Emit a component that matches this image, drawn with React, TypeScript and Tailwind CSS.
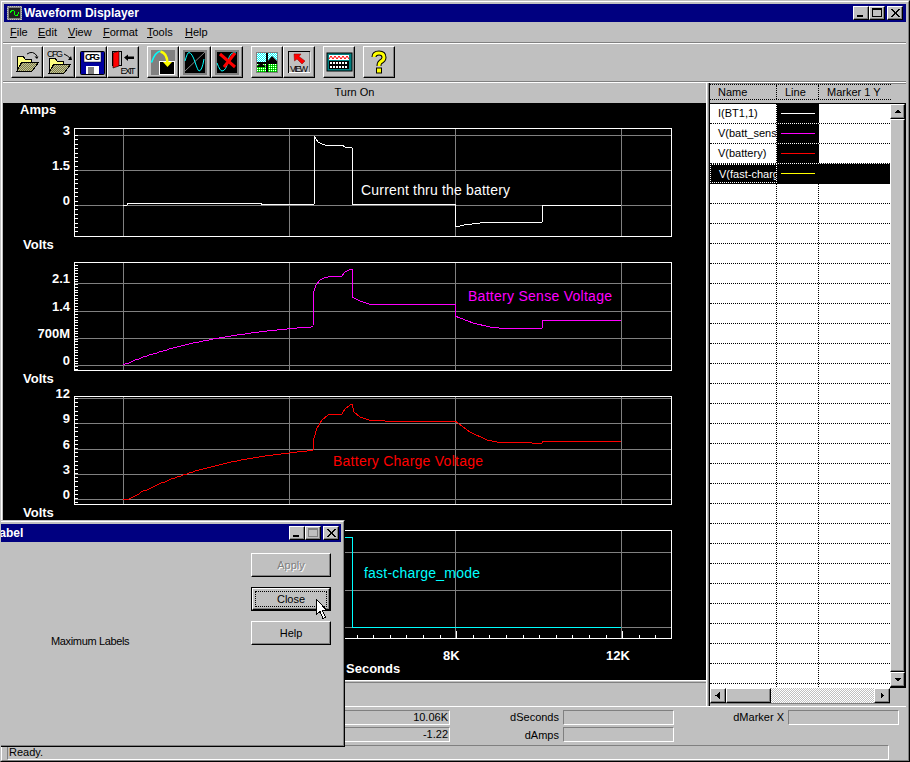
import type { ReactNode } from "react";

const raised = "border border-white border-r-black border-b-black shadow-[inset_-1px_-1px_0_#808080]";
const sunken = "border border-[#808080] border-r-white border-b-white";

const menus = [
  { label: "File", key: "F", rest: "ile", width: "w-[28px]" },
  { label: "Edit", key: "E", rest: "dit", width: "w-[30px]" },
  { label: "View", key: "V", rest: "iew", width: "w-[35px]" },
  { label: "Format", key: "F", rest: "ormat", width: "w-[44px]" },
  { label: "Tools", key: "T", rest: "ools", width: "w-[38px]" },
  { label: "Help", key: "H", rest: "elp", width: "w-[30px]" }
];

const rows = [
  { name: "I(BT1,1)", color: "#ffffff" },
  { name: "V(batt_sense)", color: "#ff00ff" },
  { name: "V(battery)", color: "#ff0000" },
  { name: "V(fast-charge_mode)", color: "#ffff00", selected: true }
];

// slow RC style rise, stepped to whole pixels like the plot
const rise = (x0: number, x1: number, y0: number, amount: number, tau: number) => {
  const out: string[] = [];
  for (let x = x0; x <= x1; x += 2) {
    out.push(`${x},${Math.round(y0 - amount * (1 - Math.exp(-(x - x0) / tau)))}`);
  }
  return out.join(" ");
};

const currentTrace =
  "123,205 127,205 127,203 261,203 261,204 314,204 314,136 316,139 318,142 322,144 325,145 342,145 345,147 352,148 352,204 455,204 455,227 460,226 464,225 472,224 480,223 493,222 542,222 542,205 621,205";
const senseTrace = `${rise(123, 314, 365, 47, 110)} 314,291 316,285 320,280 324,278 328,277 342,276 345,272 349,270 352,269 352,297 360,301 369,304 455,304 455,316 473,323 490,327 499,328 542,328 542,320 621,321`;
const chargeTrace = `123,499 ${rise(129, 314, 499, 58.7, 102)} 314,438 317,428 322,420 328,415 342,414 345,409 350,405 352,404 354,412 360,417 369,420 385,421 455,421 470,432 487,440 497,442 530,442 532,443 542,443 542,441 621,441`;

const ticks = (start: number, end: number, step: number) => {
  const out: number[] = [];
  for (let y = start; y <= end; y += step) out.push(Math.round(y) + 0.5);
  return out;
};

function Plot({ top, bottom, grid, tickStart, tickStep }: { top: number; bottom: number; grid: number[]; tickStart: number; tickStep: number }) {
  return (
    <g shapeRendering="crispEdges">
      {grid.map((y) => (
        <line key={y} x1={74} x2={671} y1={y} y2={y} stroke="#808080" />
      ))}
      {[123.5, 289.5, 455.5, 621.5].map((x) => (
        <line key={x} x1={x} x2={x} y1={top} y2={bottom} stroke="#808080" />
      ))}
      <rect x={74.5} y={top} width={597} height={bottom - top} fill="none" stroke="#ffffff" />
      {ticks(tickStart, bottom, tickStep).map((y) => (
        <line key={y} x1={75} x2={78} y1={y} y2={y} stroke="#ffffff" />
      ))}
    </g>
  );
}

function Label({ x, y, anchor, children }: { x: number; y: number; anchor?: "end" | "middle"; children: ReactNode }) {
  return (
    <text x={x} y={y} textAnchor={anchor} fill="#ffffff" fontSize={13} fontWeight={700}>
      {children}
    </text>
  );
}

function Note({ x, y, width, color, children }: { x: number; y: number; width: number; color: string; children: ReactNode }) {
  return (
    <text x={x} y={y} fill={color} fontSize={14} textLength={width} lengthAdjust="spacing">
      {children}
    </text>
  );
}

function Chart() {
  return (
    <svg viewBox="3 103 703 577" className="block h-[577px] w-[703px]">
      <Plot top={128.5} bottom={236.5} grid={[135.5, 170.5, 205.5]} tickStart={135} tickStep={4.375} />
      <Plot top={262.5} bottom={370.5} grid={[283.5, 311.5, 338.5, 365.5]} tickStart={265} tickStep={2.73} />
      <Plot top={396.5} bottom={504.5} grid={[398.5, 423.5, 449.5, 474.5, 499.5]} tickStart={398} tickStep={4.17} />
      <Plot top={530.5} bottom={638.5} grid={[552.5, 590.5, 627.5]} tickStart={532} tickStep={4.5} />

      <g shapeRendering="crispEdges">
        {ticks(340, 671, 16.6).map((x, i) => (
          <line key={x} x1={x} x2={x} y1={i === 7 || i === 17 ? 631 : 635} y2={638} stroke="#ffffff" />
        ))}
      </g>

      <g fill="none" strokeLinejoin="round" shapeRendering="crispEdges">
        <polyline points={currentTrace} stroke="#ffffff" />
        <polyline points={senseTrace} stroke="#ff00ff" />
        <polyline points={chargeTrace} stroke="#ff0000" />
        <polyline points="300,537.5 352.5,537.5 352.5,627.5 621,627.5" stroke="#00ffff" />
      </g>

      <Label x={20} y={114}>Amps</Label>
      <Label x={70} y={135} anchor="end">3</Label>
      <Label x={70} y={170} anchor="end">1.5</Label>
      <Label x={70} y={205} anchor="end">0</Label>
      <Label x={23} y={249}>Volts</Label>
      <Label x={70} y={283} anchor="end">2.1</Label>
      <Label x={70} y={311} anchor="end">1.4</Label>
      <Label x={70} y={338} anchor="end">700M</Label>
      <Label x={70} y={365} anchor="end">0</Label>
      <Label x={23} y={383}>Volts</Label>
      <Label x={70} y={398} anchor="end">12</Label>
      <Label x={70} y={423} anchor="end">9</Label>
      <Label x={70} y={449} anchor="end">6</Label>
      <Label x={70} y={474} anchor="end">3</Label>
      <Label x={70} y={499} anchor="end">0</Label>
      <Label x={23} y={517}>Volts</Label>
      <Label x={443} y={660}>8K</Label>
      <Label x={606} y={660}>12K</Label>
      <Label x={346} y={673}>Seconds</Label>

      <Note x={361} y={195} width={149} color="#ffffff">Current thru the battery</Note>
      <Note x={468} y={301} width={144} color="#ff00ff">Battery Sense Voltage</Note>
      <Note x={333} y={466} width={150} color="#ff0000">Battery Charge Voltage</Note>
      <Note x={364} y={578} width={116} color="#00ffff">fast-charge_mode</Note>
    </svg>
  );
}

function Dither() {
  return (
    <defs>
      <pattern id="olive" width="2" height="2" patternUnits="userSpaceOnUse">
        <rect width="2" height="2" fill="#c0c0a0" />
        <rect width="1" height="1" fill="#808040" />
        <rect x="1" y="1" width="1" height="1" fill="#808040" />
      </pattern>
      <pattern id="sky" width="2" height="2" patternUnits="userSpaceOnUse">
        <rect width="2" height="2" fill="#ffffff" />
        <rect width="1" height="1" fill="#00ffff" />
        <rect x="1" y="1" width="1" height="1" fill="#00ffff" />
      </pattern>
      <pattern id="grass" width="2" height="2" patternUnits="userSpaceOnUse">
        <rect width="2" height="2" fill="#00ff00" />
        <rect width="1" height="1" fill="#008000" />
        <rect x="1" y="1" width="1" height="1" fill="#ffffff" />
      </pattern>
    </defs>
  );
}

function Folder({ dy = 0 }: { dy?: number }) {
  return (
    <g transform={`translate(0 ${dy})`} stroke="#000000" strokeWidth="1" shapeRendering="crispEdges">
      <polygon points="5,9 11,9 13,12 19,12 19,15 10,15 5,23" fill="#ffff80" />
      <polygon points="10,15 27,15 20,24 5,24" fill="url(#olive)" />
    </g>
  );
}

function ToolIcon({ type }: { type: number }) {
  return (
    <svg viewBox="0 0 30 30" className="block h-[30px] w-[30px]" fontFamily="'Liberation Sans', Arial, sans-serif">
      {type === 0 && (
        <>
          <Folder />
          <path d="M15 7Q21 3 25 9" fill="none" stroke="#000000" />
          <path d="M22.500 9.500h4l-1.500 2.500z" fill="#000000" />
        </>
      )}
      {type === 1 && (
        <>
          <Folder dy={2} />
          <text x="3" y="10" fontSize="9" fill="#000000" textLength="16">CFG</text>
          <path d="M20 7Q23 8 27 12" fill="none" stroke="#000000" />
          <path d="M24 13h4l-1-4z" fill="#000000" />
        </>
      )}
      {type === 2 && (
        <>
          <rect x="4.500" y="4.500" width="24" height="23" rx="1" fill="#0000a0" stroke="#000000" />
          <rect x="8" y="5" width="17" height="10" fill="#ffffff" stroke="#000000" strokeWidth=".5" />
          <text x="9" y="13" fontSize="9" fontWeight="700" fill="#000000" textLength="15">CFG</text>
          <rect x="10" y="19" width="13" height="8" fill="#ffffff" />
          <rect x="12" y="20" width="6" height="7" fill="#808080" />
        </>
      )}
      {type === 3 && (
        <>
          <rect x="4.500" y="4.500" width="9" height="14" fill="#c0c0c0" stroke="#000000" />
          <polygon points="5,6 11,4 11,19 5,21" fill="#ff0000" stroke="#000000" strokeWidth=".6" />
          <path d="M16 10.500l4-3v2h6v2.500h-6v2z" fill="#000000" />
          <text x="12.500" y="27" fontSize="9" fill="#000000" textLength="15">EXIT</text>
        </>
      )}
      {type === 4 && (
        <>
          <rect x="3" y="3" width="24" height="25" fill="#808080" />
          <rect x="11.500" y="14.500" width="15" height="13" fill="#000000" stroke="#ffffff" />
          <path d="M3.500 15.500Q7 5 12.500 4" fill="none" stroke="#00ffff" strokeWidth="1.500" />
          <path d="M12.500 4.500Q19 6 19.500 16" fill="none" stroke="#ffff00" strokeWidth="2.500" />
          <path d="M15 15h9l-4.500 5z" fill="#ffff00" />
        </>
      )}
      {(type === 5 || type === 6) && (
        <>
          <rect x="3" y="3" width="24" height="25" fill="#808080" />
          <rect x="5" y="5" width="20" height="21" fill="#000000" />
          {type === 5 ? (
            <>
              <path d="M5 24L25 5" stroke="#808080" />
              <path d="M5 14Q7.500 5 9 5.500Q12 6 15 15T19 24Q22 24 24 12" fill="none" stroke="#00ffff" />
            </>
          ) : (
            <>
              <path d="M5 16Q8 24 10 24Q14 24 16 14T24 6" fill="none" stroke="#00ffff" />
              <path d="M8 7L23 20M23 6L12 20" stroke="#ff0000" strokeWidth="3" />
            </>
          )}
        </>
      )}
      {type === 7 && (
        <>
          <rect x="4" y="5" width="22" height="21" fill="url(#sky)" />
          <path d="M15 15l5-6 6 6z" fill="#000000" />
          <rect x="4" y="16" width="22" height="10" fill="url(#grass)" />
          <path d="M4 20l5-4 5 4z" fill="#000000" />
          <path d="M15 5v21M4 15.500h22" stroke="#000000" strokeWidth="2" shapeRendering="crispEdges" />
          <rect x="4.500" y="5.500" width="21" height="20" fill="none" stroke="#808080" />
        </>
      )}
      {type === 8 && (
        <>
          <rect x="4.500" y="4.500" width="21" height="21" fill="#c0c0c0" stroke="#000000" />
          <path d="M5 25.500h21V5" fill="none" stroke="#ffffff" />
          <polygon points="10,7 17,7 15,9.500 21,14 18,17 13,12 10.500,14" fill="#ff0000" stroke="#800000" strokeWidth=".5" />
          <text x="6" y="24.500" fontSize="9" fill="#000000" textLength="18">VIEW</text>
        </>
      )}
      {type === 9 && (
        <>
          <rect x="3" y="6" width="25" height="18" fill="#008080" stroke="#000000" />
          <rect x="5" y="8" width="20" height="5" fill="#ffffff" />
          <path d="M5 12l2-3 2 3 2-3 2 3 2-3 2 3 2-3 2 3 2-3 2 3" fill="none" stroke="#ff0000" />
          <rect x="5" y="14" width="20" height="8" fill="#000000" />
          <path d="M6 16h18M6 20h18" stroke="#ffffff" strokeWidth="2" strokeDasharray="2 1" shapeRendering="crispEdges" />
        </>
      )}
      {type === 10 && (
        <>
          <path d="M10 10Q10 6 15 6Q20 6 20 10.500Q20 13 16.500 15Q15 16 15 19" fill="none" stroke="#000000" strokeWidth="5" />
          <path d="M10 10Q10 6 15 6Q20 6 20 10.500Q20 13 16.500 15Q15 16 15 19" fill="none" stroke="#ffff00" strokeWidth="3" />
          <rect x="12.500" y="21" width="5" height="5" fill="#ffff00" stroke="#000000" />
        </>
      )}
    </svg>
  );
}

function ToolButton({ type }: { type: number }) {
  return (
    <button className={`h-[32px] w-[32px] bg-[#c0c0c0] ${raised}`}>
      <ToolIcon type={type} />
    </button>
  );
}

function CaptionButton({ kind, disabled }: { kind: "min" | "max" | "close"; disabled?: boolean }) {
  const ink = disabled ? "#808080" : "#000000";
  return (
    <span className={`block h-[14px] w-[16px] bg-[#c0c0c0] ${raised}`}>
      <svg viewBox="0 0 14 12" className="block h-[12px] w-[14px]" shapeRendering="crispEdges">
        {kind === "min" && <rect x="3" y="8" width="6" height="2" fill={ink} />}
        {kind === "max" && (
          <>
            <rect x="2.500" y="1.500" width="9" height="8" fill="none" stroke={ink} />
            <rect x="2" y="1" width="10" height="2" fill={ink} />
          </>
        )}
        {kind === "close" && <path d="M3 2l8 8M4 2l8 8M11 2l-8 8M12 2l-8 8" stroke={ink} />}
      </svg>
    </span>
  );
}

function Arrow({ dir }: { dir: "up" | "down" | "left" | "right" }) {
  const points = {
    up: "7,4 3.500,8 10.500,8",
    down: "3.500,5 10.500,5 7,9",
    left: "4.500,6.500 8.500,3 8.500,10",
    right: "5.500,3 5.500,10 9.500,6.500"
  }[dir];
  return (
    <svg viewBox="0 0 14 13" className="block h-[13px] w-[14px]" shapeRendering="crispEdges">
      <polygon points={points} fill="#000000" />
    </svg>
  );
}

function Field({ width, value }: { width: string; value?: string }) {
  return (
    <div className={`h-[15px] pr-px text-right leading-[13px] ${width} ${sunken}`}>{value}</div>
  );
}

function DialogButton({ children, state }: { children: ReactNode; state?: "disabled" | "default" }) {
  if (state === "default") {
    return (
      <button className="h-[24px] w-[80px] border border-black bg-[#c0c0c0] p-0">
        <span className={`flex h-full w-full items-center justify-center ${raised}`}>
          <span className="flex h-[16px] w-[72px] items-center justify-center border border-dotted border-black">
            {children}
          </span>
        </span>
      </button>
    );
  }
  return (
    <button
      className={`h-[24px] w-[80px] bg-[#c0c0c0] ${raised} ${state === "disabled" ? "text-[#808080] [text-shadow:1px_1px_0_#ffffff]" : ""}`}
    >
      {children}
    </button>
  );
}

function Dialog() {
  return (
    <div className="absolute left-[-31px] top-[519px] h-[227px] w-[375px] border border-[#c0c0c0] border-r-black border-b-black bg-[#c0c0c0]">
      <div className="h-full border border-white border-r-[#808080] border-b-[#808080] p-[2px]">
        <div className="flex h-[18px] items-center bg-[#000080] pl-[18px] pr-[2px] text-[12px] font-bold text-white">
          <span className="flex-1">Label</span>
          <CaptionButton kind="min" />
          <CaptionButton kind="max" disabled />
          <span className="w-[2px]" />
          <CaptionButton kind="close" />
        </div>
        <div className="flex justify-between pr-[10px] text-[11px] text-black">
          <div className="pl-[77px] pt-[92px] leading-[14px] tracking-[-0.35px]">Maximum Labels</div>
          <div className="flex flex-col gap-[10px] pt-[11px]">
            <DialogButton state="disabled">Apply</DialogButton>
            <DialogButton state="default">Close</DialogButton>
            <DialogButton>Help</DialogButton>
          </div>
        </div>
      </div>
    </div>
  );
}

function Cursor() {
  return (
    <svg viewBox="0 0 12 21" className="absolute left-[315px] top-[598px] h-[21px] w-[12px]" shapeRendering="crispEdges">
      <polygon points="0.500,0.500 0.500,15.500 4,12.500 7,19.500 9.500,18.500 6.500,11.500 11,11.500" fill="#ffffff" stroke="#000000" />
    </svg>
  );
}

function NameTable() {
  const blanks = Array.from({ length: 26 }, (_, i) => i);
  return (
    <div className="w-[180px] overflow-hidden bg-white text-[11px] text-black">
      {rows.map((row) => (
        <div
          key={row.name}
          className={`grid h-[20px] grid-cols-[67px_42px_71px] border-b border-dotted border-black ${row.selected ? "bg-black" : ""}`}
        >
          <div
            className={`overflow-hidden whitespace-nowrap border-r border-dotted pl-[8px] leading-[18px] ${row.selected ? "border border-white pl-[7px] text-white" : "border-black"}`}
          >
            {row.name}
          </div>
          <div className="flex items-center border-r border-dotted border-black bg-black pl-[4px]">
            <svg viewBox="0 0 34 3" className="block h-[3px] w-[34px]" shapeRendering="crispEdges">
              <line x1={0} x2={34} y1={1.5} y2={1.5} stroke={row.color} strokeWidth={1} />
            </svg>
          </div>
          <div />
        </div>
      ))}
      {blanks.map((i) => (
        <div key={i} className="grid h-[20px] grid-cols-[67px_42px_71px] border-b border-dotted border-black">
          <div className="border-r border-dotted border-black" />
          <div className="border-r border-dotted border-black" />
          <div />
        </div>
      ))}
    </div>
  );
}

function RightPanel() {
  return (
    <div className="flex w-[200px] flex-col border-l border-white pl-px">
      <div className="flex h-full flex-col border-l border-[#808080]">
        <div className="flex h-full flex-col border-l border-black">
          <div className="h-[20px] border-t border-[#808080] text-[11px] text-black">
            <div className="grid h-[16px] w-[181px] grid-cols-[67px_42px_72px] border-y border-dotted border-black leading-[14px]">
              <div className="border-r border-dotted border-black pl-[8px]">Name</div>
              <div className="border-r border-dotted border-black pl-[8px]">Line</div>
              <div className="pl-[8px]">Marker 1 Y</div>
            </div>
          </div>
          <div className="flex h-[585px] border-t border-black">
            <NameTable />
            <div className="flex w-[16px] flex-col border-r border-b border-black">
              <div className={`h-[15px] w-[15px] ${raised}`}>
                <Arrow dir="up" />
              </div>
              <div className={`flex-1 ${raised}`} />
              <div className={`h-[15px] w-[15px] ${raised}`}>
                <Arrow dir="down" />
              </div>
            </div>
          </div>
          <div className="flex h-[16px] w-[180px] border-b border-[#808080]">
            <div className={`w-[16px] ${raised}`}>
              <Arrow dir="left" />
            </div>
            <div className={`w-[45px] ${raised}`} />
            <div className="flex-1 bg-[repeating-conic-gradient(#ffffff_0_25%,#c0c0c0_0_50%)] bg-[length:2px_2px]" />
            <div className={`w-[16px] ${raised}`}>
              <Arrow dir="right" />
            </div>
          </div>
        </div>
      </div>
    </div>
  );
}

export default function App() {
  return (
    <div className="relative h-[762px] w-[910px] overflow-hidden border border-[#c0c0c0] border-r-black border-b-black bg-[#c0c0c0] text-black [font-family:'Liberation_Sans',Arial,sans-serif]">
      <div className="h-full border border-white border-r-[#808080] border-b-[#808080] pl-px pr-[2px] pt-[2px]">
        <div className="ml-px flex h-[18px] items-center bg-[#000080] pl-[3px] pr-[3px] text-[12px] font-bold text-white">
          <svg viewBox="0 0 15 14" className="mr-[2px] h-[14px] w-[15px]" shapeRendering="crispEdges">
            <rect width="15" height="14" fill="#808080" />
            <rect x=".5" y=".5" width="14" height="13" fill="none" stroke="#c0c0c0" strokeDasharray="1 1" />
            <rect x="2" y="2" width="11" height="10" fill="#202020" />
            <path d="M3 7l2-3 2 1 1 4 2 1 2-4" fill="none" stroke="#00ff00" />
          </svg>
          <span className="flex-1">Waveform Displayer</span>
          <CaptionButton kind="min" />
          <CaptionButton kind="max" />
          <span className="w-[2px]" />
          <CaptionButton kind="close" />
        </div>

        <div className="flex h-[20px] items-center pl-[7px] text-[11px] leading-[20px]">
          {menus.map((menu) => (
            <span key={menu.label} className={`whitespace-nowrap ${menu.width}`}>
              <span className="underline underline-offset-1">{menu.key}</span>
              {menu.rest}
            </span>
          ))}
        </div>

        <div className="h-[2px] border-t border-[#808080] border-b border-b-white" />
        <div className="flex h-[37px] items-start pl-[8px] pt-[2px]">
          {[0, 1, 2, 3].map((i) => (
            <ToolButton key={i} type={i} />
          ))}
          <span className="w-[8px]" />
          {[4, 5, 6].map((i) => (
            <ToolButton key={i} type={i} />
          ))}
          <span className="w-[8px]" />
          {[7, 8].map((i) => (
            <ToolButton key={i} type={i} />
          ))}
          <span className="w-[8px]" />
          <ToolButton type={9} />
          <span className="w-[8px]" />
          <ToolButton type={10} />
        </div>
        <div className="h-[2px] border-t border-[#808080] border-b border-b-white" />

        <div className="flex h-[623px]">
          <div className="w-[703px]">
            <div className="h-[20px] text-center text-[11px] leading-[18px]">Turn On</div>
            <div className="border-b border-white bg-black">
              <Chart />
            </div>
            <div className="mt-px h-px bg-[#808080]" />
          </div>
          <RightPanel />
        </div>

        <div className="border-t border-white pt-[2px] text-[11px]">
          <div className="flex items-center">
            <div className="ml-[297px]" />
            <Field width="w-[150px]" value="10.06K" />
            <div className="w-[113px] pr-[4px] text-right">dSeconds</div>
            <Field width="w-[111px]" />
            <div className="w-[114px] pr-[4px] text-right">dMarker X</div>
            <Field width="w-[111px]" />
          </div>
          <div className="mt-px flex items-center">
            <div className="ml-[297px]" />
            <Field width="w-[150px]" value="-1.22" />
            <div className="w-[113px] pr-[4px] text-right">dAmps</div>
            <Field width="w-[111px]" />
          </div>
          <div className={`ml-[4px] mt-[2px] h-[15px] w-[882px] pl-px leading-[13px] ${sunken}`}>Ready.</div>
        </div>
      </div>

      <svg className="absolute h-0 w-0">
        <Dither />
      </svg>
      <Dialog />
      <Cursor />
    </div>
  );
}
